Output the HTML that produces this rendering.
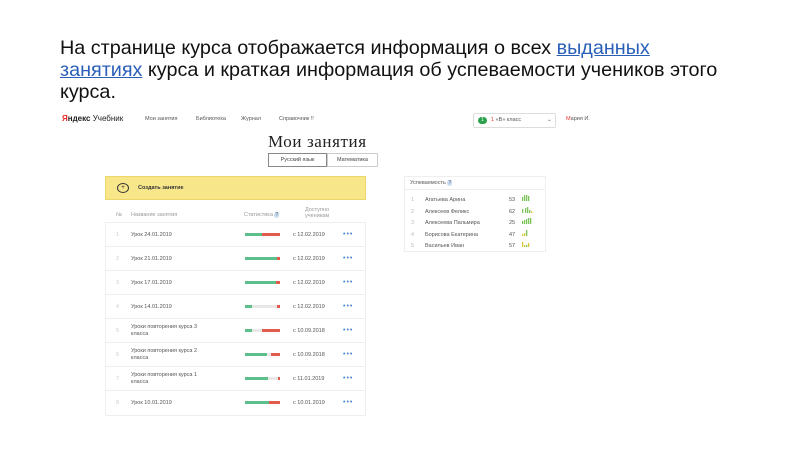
<!DOCTYPE html>
<html><head><meta charset="utf-8"><style>
*{margin:0;padding:0;box-sizing:border-box}
body{width:800px;height:450px;background:#fff;position:relative;overflow:hidden;font-family:"Liberation Sans",sans-serif;color:#222}
.t{position:absolute;left:60px;top:37px;font-size:19.8px;line-height:22px;color:#111;width:740px}
.t a{color:#2a5fb8;text-decoration:underline}
.a{position:absolute;white-space:nowrap}
.s{font-size:5.5px;color:#555}
.row{position:absolute;left:105px;width:260px;height:24px;border-bottom:1px solid #eee}
.bar{position:absolute;left:140px;top:10px;width:35px;height:3px;background:#e8e8e8}
.bar i{position:absolute;top:0;height:3px}
.g{background:#5cc08a}.r{background:#e05a4e}
.d{position:absolute;left:238px;top:10px;font-size:7px;line-height:4px;color:#48c;letter-spacing:1px}
</style></head><body>
<div class="t">На странице курса отображается информация о всех <a>выданных<br>занятиях</a> курса и краткая информация об успеваемости учеников этого<br>курса.</div>

<div class="a" style="left:62px;top:114px;font-size:8px"><b style="color:#e22">Я</b><b>ндекс</b> Учебник</div>
<div class="a s" style="left:145px;top:116px">Мои занятия</div>
<div class="a s" style="left:196px;top:116px">Библиотека</div>
<div class="a s" style="left:241px;top:116px">Журнал</div>
<div class="a s" style="left:279px;top:116px">Справочник !!</div>
<div class="a" style="left:473px;top:113px;width:83px;height:15px;border:1px solid #ddd;border-radius:2px"></div>
<div class="a" style="left:478px;top:117px;width:9px;height:7px;border-radius:4px;background:#2aa14a;color:#fff;font-size:5px;text-align:center;line-height:7px">1</div>
<div class="a s" style="left:491px;top:117px"><span style="color:#e33">1</span> «В» класс</div>
<div class="a s" style="left:547px;top:117px">⌄</div>
<div class="a s" style="left:566px;top:116px"><span style="color:#e33">М</span>ария И.</div>

<div class="a" style="left:268px;top:132px;font-family:'Liberation Serif',serif;font-size:17px;letter-spacing:0.6px;color:#222">Мои занятия</div>
<div class="a" style="left:268px;top:153px;width:59px;height:14px;border:1px solid #888;font-size:5.5px;text-align:center;line-height:12px;color:#444">Русский язык</div>
<div class="a" style="left:327px;top:153px;width:51px;height:14px;border:1px solid #ccc;font-size:5.5px;text-align:center;line-height:12px;color:#444">Математика</div>

<div class="a" style="left:105px;top:176px;width:261px;height:24px;background:#f8e68a;border:1px solid #eed76a"></div>
<div class="a" style="left:117px;top:183px;width:12px;height:10px;border:1px solid #333;border-radius:50%;font-size:6px;text-align:center;line-height:8px">+</div>
<div class="a s" style="left:138px;top:185px;color:#333;font-weight:bold">Создать занятие</div>

<div class="a s" style="left:116px;top:212px;color:#999">№</div>
<div class="a s" style="left:131px;top:212px;color:#999">Название занятия</div>
<div class="a s" style="left:244px;top:212px;color:#999">Статистика <span style="background:#cde;color:#468;border-radius:3px;padding:0 1px">?</span></div>
<div class="a s" style="left:305px;top:207px;color:#999;line-height:6px">Доступно<br>ученикам</div>

<div class="a" style="left:105px;top:222px;width:261px;height:194px;border:1px solid #eee"></div>

<div class="row" style="top:223px"><div class="a s" style="left:11px;top:9px;color:#ccc">1</div><div class="a s" style="left:26px;top:9px">Урок 24.01.2019</div><div class="bar"><i class="g" style="left:0;width:17px"></i><i class="r" style="left:17px;width:18px"></i></div><div class="a s" style="left:188px;top:9px">с 12.02.2019</div><div class="d">•••</div></div>
<div class="row" style="top:247px"><div class="a s" style="left:11px;top:9px;color:#ccc">2</div><div class="a s" style="left:26px;top:9px">Урок 21.01.2019</div><div class="bar"><i class="g" style="left:0;width:32px"></i><i class="r" style="left:32px;width:3px"></i></div><div class="a s" style="left:188px;top:9px">с 12.02.2019</div><div class="d">•••</div></div>
<div class="row" style="top:271px"><div class="a s" style="left:11px;top:9px;color:#ccc">3</div><div class="a s" style="left:26px;top:9px">Урок 17.01.2019</div><div class="bar"><i class="g" style="left:0;width:31px"></i><i class="r" style="left:31px;width:4px"></i></div><div class="a s" style="left:188px;top:9px">с 12.02.2019</div><div class="d">•••</div></div>
<div class="row" style="top:295px"><div class="a s" style="left:11px;top:9px;color:#ccc">4</div><div class="a s" style="left:26px;top:9px">Урок 14.01.2019</div><div class="bar"><i class="g" style="left:0;width:7px"></i><i class="r" style="left:32px;width:3px"></i></div><div class="a s" style="left:188px;top:9px">с 12.02.2019</div><div class="d">•••</div></div>
<div class="row" style="top:319px"><div class="a s" style="left:11px;top:9px;color:#ccc">5</div><div class="a s" style="left:26px;top:5px;line-height:7px">Уроки повторения курса 3<br>класса</div><div class="bar"><i class="g" style="left:0;width:7px"></i><i class="r" style="left:17px;width:18px"></i></div><div class="a s" style="left:188px;top:9px">с 10.09.2018</div><div class="d">•••</div></div>
<div class="row" style="top:343px"><div class="a s" style="left:11px;top:9px;color:#ccc">6</div><div class="a s" style="left:26px;top:5px;line-height:7px">Уроки повторения курса 2<br>класса</div><div class="bar"><i class="g" style="left:0;width:22px"></i><i class="r" style="left:26px;width:9px"></i></div><div class="a s" style="left:188px;top:9px">с 10.09.2018</div><div class="d">•••</div></div>
<div class="row" style="top:367px"><div class="a s" style="left:11px;top:9px;color:#ccc">7</div><div class="a s" style="left:26px;top:5px;line-height:7px">Уроки повторения курса 1<br>класса</div><div class="bar"><i class="g" style="left:0;width:23px"></i><i class="r" style="left:33px;width:2px"></i></div><div class="a s" style="left:188px;top:9px">с 11.01.2019</div><div class="d">•••</div></div>
<div class="row" style="top:391px;border:none"><div class="a s" style="left:11px;top:9px;color:#ccc">8</div><div class="a s" style="left:26px;top:9px">Урок 10.01.2019</div><div class="bar"><i class="g" style="left:0;width:24px"></i><i class="r" style="left:24px;width:11px"></i></div><div class="a s" style="left:188px;top:9px">с 10.01.2019</div><div class="d">•••</div></div>

<div class="a" style="left:404px;top:176px;width:142px;height:76px;border:1px solid #eee"></div>
<div class="a" style="left:404px;top:189px;width:142px;border-top:1px solid #eee"></div>
<div class="a s" style="left:410px;top:180px">Успеваемость <span style="background:#cde;color:#468;border-radius:3px;padding:0 1px">?</span></div>
<div class="a s" style="left:411px;top:195px;color:#bbb;line-height:11.5px">1<br>2<br>3<br>4<br>5</div>
<div class="a s" style="left:425px;top:195px;line-height:11.5px">Агатьева Арина<br>Алексеев Феликс<br>Алексеева Пальмира<br>Борисова Екатерина<br>Васильев Иван</div>
<div class="a s" style="left:509px;top:195px;line-height:11.5px">53<br>62<br>25<br>47<br>57</div>
<svg class="a" style="left:521px;top:193px" width="16" height="60" viewBox="0 0 16 60">
<g fill="#7cc35a">
<rect x="1" y="4" width="1.3" height="4"/><rect x="3" y="2" width="1.3" height="6"/><rect x="5" y="2" width="1.3" height="6"/><rect x="7" y="3" width="1.3" height="5"/>
<rect x="1" y="16" width="1.3" height="4"/><rect x="4" y="15" width="1.3" height="5"/><rect x="6" y="14" width="1.3" height="6"/><rect x="8" y="17" width="1.3" height="3"/><rect x="10" y="18" width="1.3" height="2" fill="#d8c93a"/>
<rect x="1" y="28" width="1.3" height="3"/><rect x="3" y="27" width="1.3" height="4"/><rect x="5" y="26" width="1.3" height="5"/><rect x="7" y="25" width="1.3" height="6"/><rect x="9" y="25" width="1.3" height="6"/>
<rect x="1" y="41" width="1.3" height="2" fill="#d8c93a"/><rect x="3" y="40" width="1.3" height="3" fill="#d8c93a"/><rect x="5" y="37" width="1.3" height="6"/>
<rect x="1" y="49" width="1.3" height="5" fill="#d8c93a"/><rect x="3" y="52" width="1.3" height="2" fill="#d8c93a"/><rect x="5" y="52" width="1.3" height="2"/><rect x="7" y="50" width="1.3" height="4" fill="#d8c93a"/>
</g></svg>
</body></html>
